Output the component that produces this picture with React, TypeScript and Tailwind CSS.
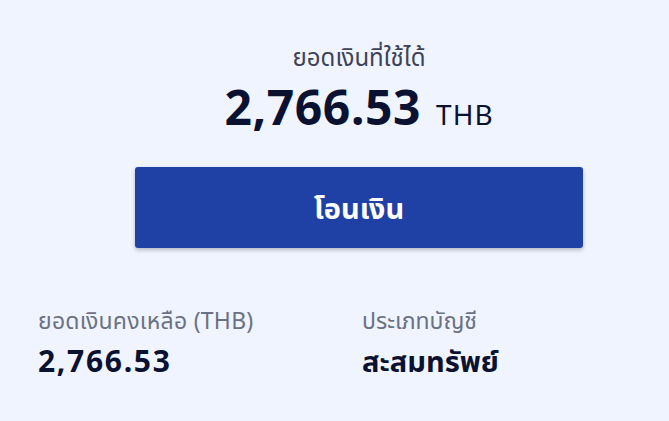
import React from "react";

export default function App() {
  return (
    <div
      className="w-[669px] h-[421px] overflow-hidden bg-[#f0f4ff] text-[#0b1130]"
      style={{ fontFamily: '"Noto Sans", "Noto Sans Thai", sans-serif' }}
    >
      <div className="w-[642px] ml-[38px] flex flex-col">
        <div className="flex flex-col items-center pt-[41px]">
          <div className="text-[24px] leading-[32px] text-[#3d4257]">ยอดเงินที่ใช้ได้</div>
          <div className="flex items-baseline gap-[15px] mt-[4px]">
            <span className="text-[48px] leading-[60px] font-bold tracking-[0.6px]">2,766.53</span>
            <span className="text-[28px] leading-[34px] tracking-[1px]">THB</span>
          </div>
        </div>
        <div className="flex justify-center mt-[30px]">
          <button className="w-[448px] h-[81px] rounded-[3px] bg-[#1f40a5] shadow-[0_2px_4px_rgba(0,0,0,0.25)] text-white text-[29px] font-bold">
            โอนเงิน
          </button>
        </div>
        <div className="grid grid-cols-2 mt-[57px]">
          <div className="flex flex-col gap-[7px]">
            <div className="text-[23px] leading-[30px] text-[#6b7184] tracking-[0.25px]">ยอดเงินคงเหลือ (THB)</div>
            <div className="text-[30px] leading-[38px] font-bold tracking-[1.7px]">2,766.53</div>
          </div>
          <div className="flex flex-col gap-[7px] pl-[3px]">
            <div className="text-[23px] leading-[30px] text-[#6b7184]">ประเภทบัญชี</div>
            <div className="text-[29px] leading-[38px] font-bold">สะสมทรัพย์</div>
          </div>
        </div>
      </div>
    </div>
  );
}
